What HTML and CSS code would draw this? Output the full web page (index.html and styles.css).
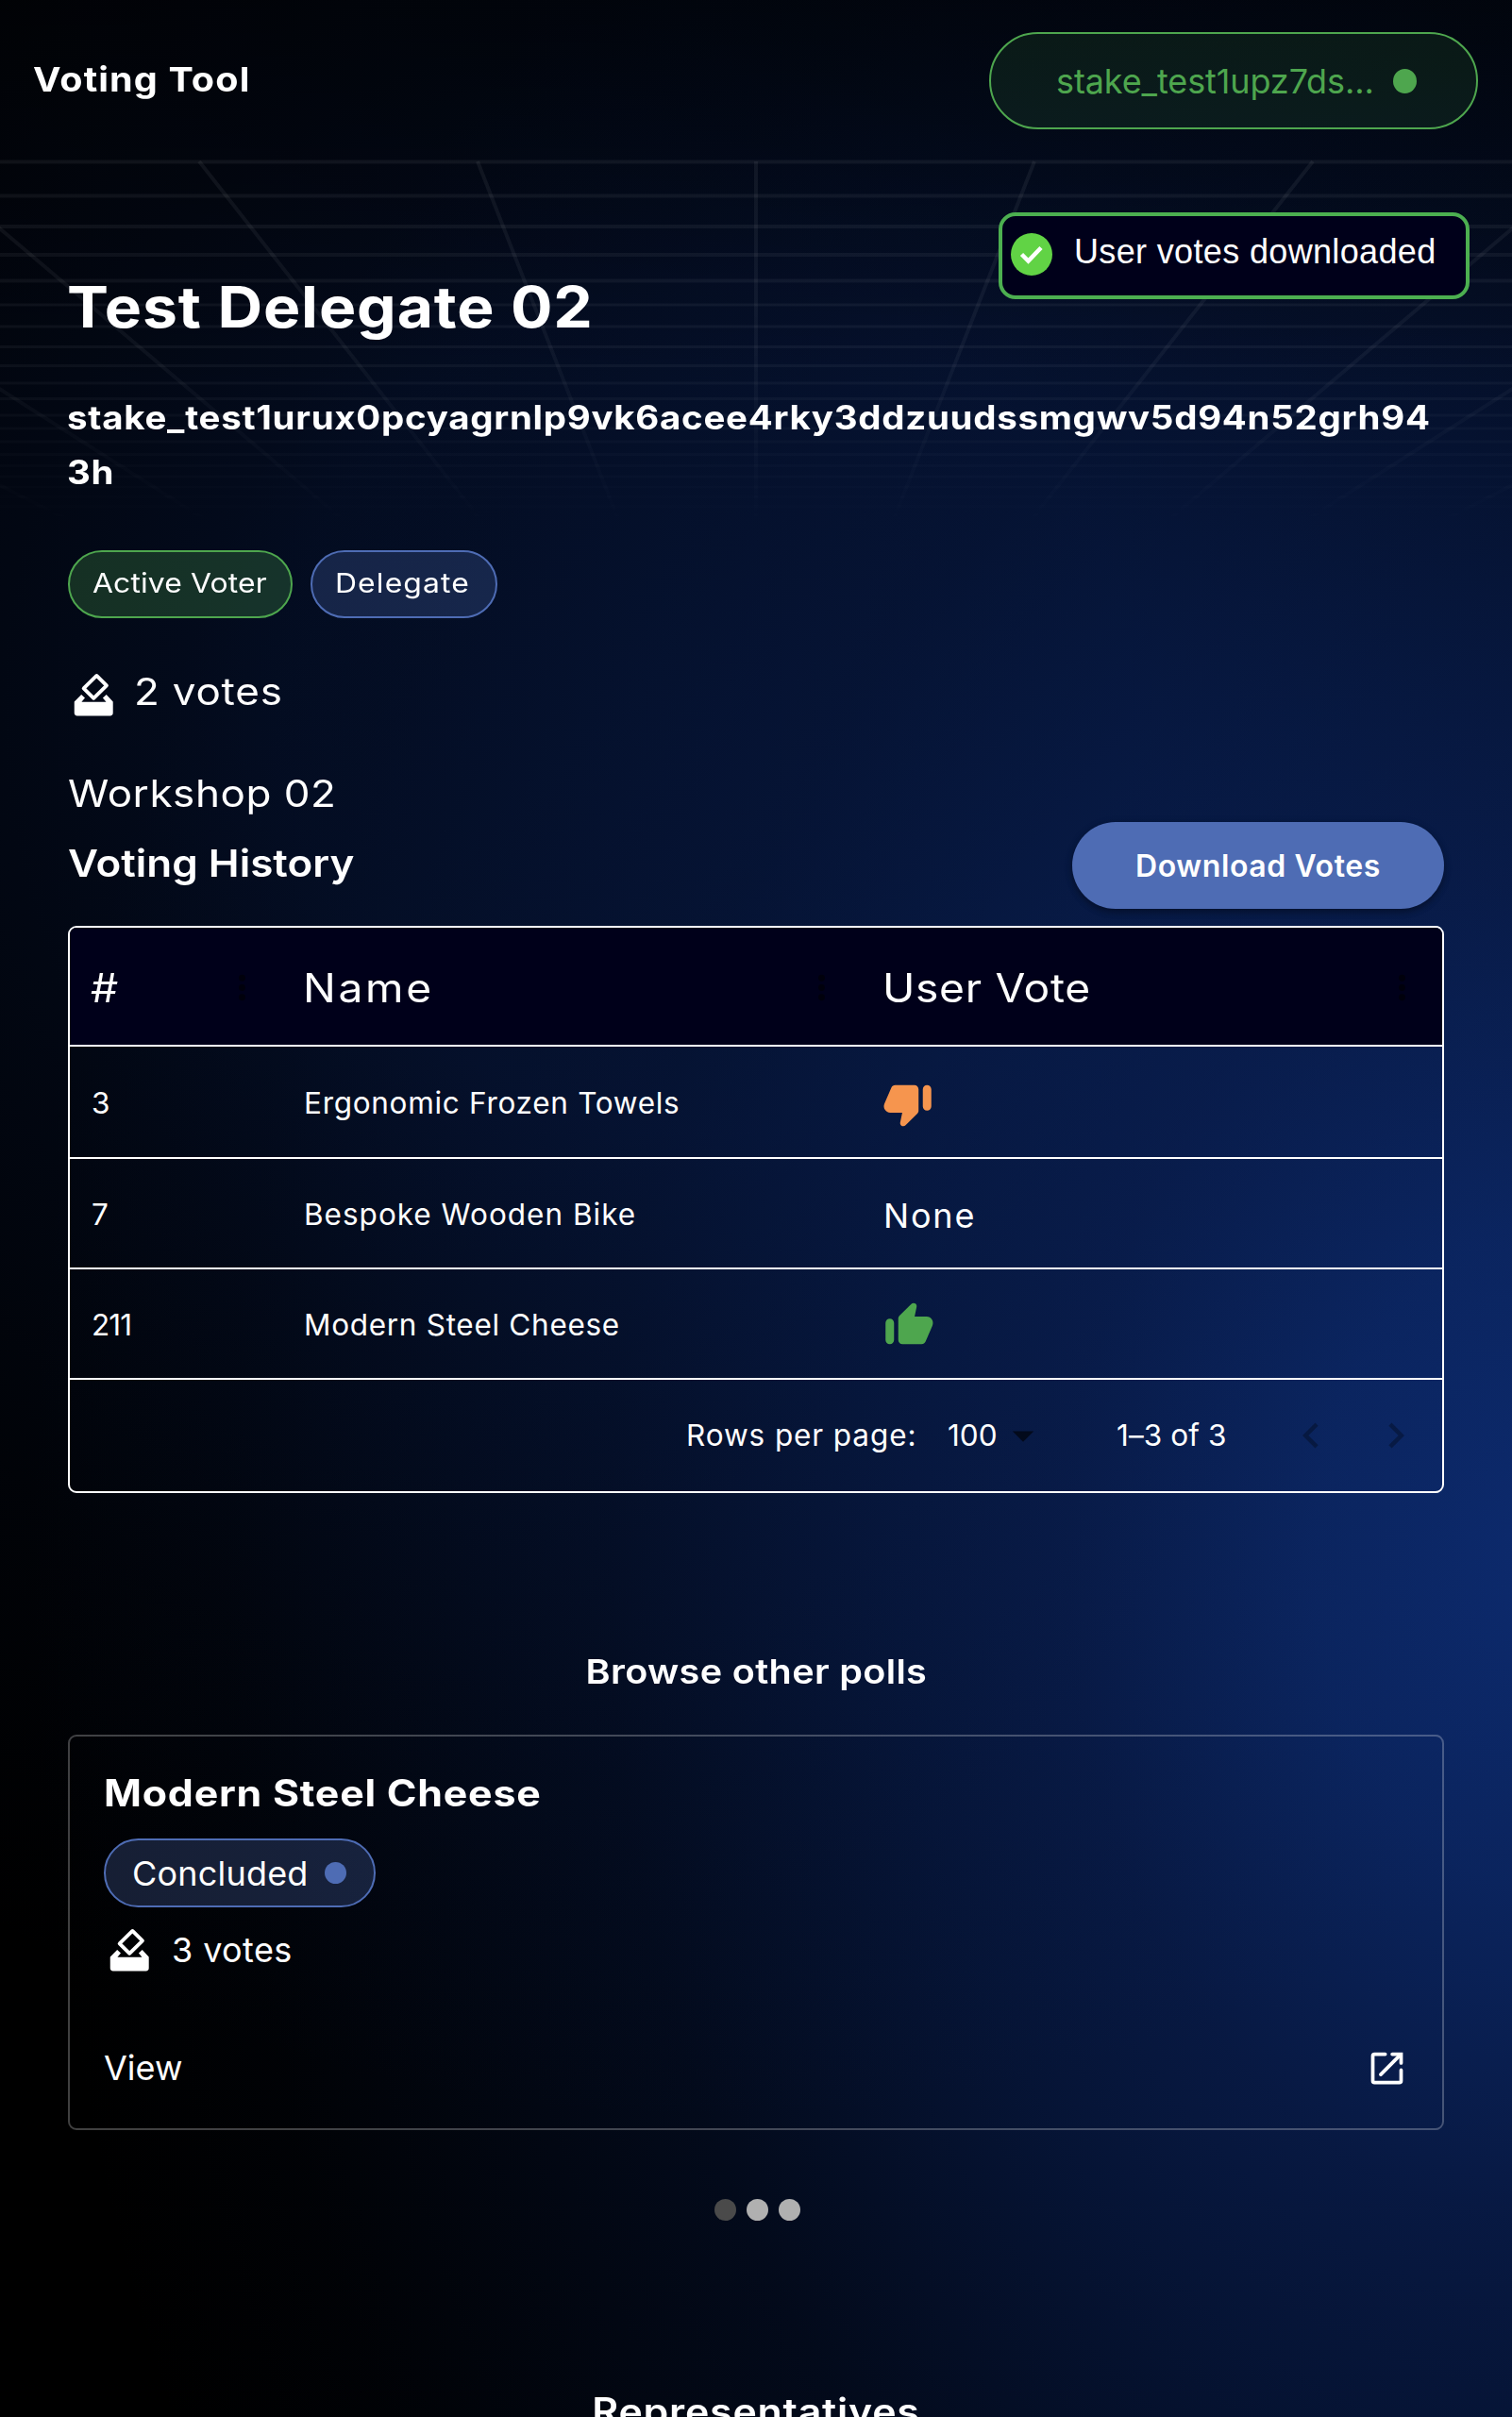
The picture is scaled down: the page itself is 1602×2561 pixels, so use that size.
FILE: index.html
```html
<!DOCTYPE html>
<html lang="en">
<head>
<meta charset="utf-8">
<title>Voting Tool</title>
<link rel="stylesheet" href="styles.css">
</head>
<body>
<svg class="grid-floor" viewBox="0 0 1602 400" aria-hidden="true">
  <defs>
    <linearGradient id="fade" x1="0" y1="0" x2="0" y2="1">
      <stop offset="0" stop-color="#fff"/><stop offset=".5" stop-color="#fff" stop-opacity=".8"/><stop offset=".99" stop-color="#fff" stop-opacity="0"/>
    </linearGradient>
    <mask id="fade-mask"><rect width="1602" height="400" fill="url(#fade)"/></mask>
  </defs>
  <g mask="url(#fade-mask)" stroke="#fff" stroke-opacity=".06" fill="none">
    <path stroke-width="4" d="M0 2.5H1602M0 38.5H1602M0 71H1602M0 101H1602M0 128.5H1602"/>
    <path stroke-width="3" d="M0 154H1602M0 177H1602M0 198.5H1602M0 218.5H1602M0 237H1602M0 253.5H1602M0 271H1602M0 285H1602M0 299H1602M0 312.5H1602M0 324.5H1602M0 336H1602M0 347H1602M0 357.5H1602M0 367.5H1602M0 377H1602"/>
    <path stroke-width="4" d="M801 2V384M506 2L656 384M1096 2L946 384M211 2L511 384M1391 2L1091 384M-84 2L366 384M1686 2L1236 384M-379 2L221 384M1981 2L1381 384M-674 2L76 384M2276 2L1526 384"/>
  </g>
</svg>

<header class="topbar">
  <a class="brand wide">Voting Tool</a>
  <button class="wallet"><span>stake_test1upz7ds...</span><i class="wallet-dot"></i></button>
</header>

<main class="page">
  <h1 class="name wide">Test Delegate 02</h1>
  <p class="stake wide">stake_test1urux0pcyagrnlp9vk6acee4rky3ddzuudssmgwv5d94n52grh94<br>3h</p>
  <div class="chips">
    <span class="chip chip-green"><span class="wide">Active Voter</span></span>
    <span class="chip chip-blue"><span class="wide">Delegate</span></span>
  </div>
  <div class="votes">
    <svg class="icon" viewBox="0 0 24 24"><path fill="none" stroke="#fff" stroke-width="1.7" stroke-linejoin="round" d="M13.5 3.1L18.2 7.7L12.1 13.7L7.4 9.1Z"/><path d="M3 15.3L6.3 12L8 13.5L6.4 15.4H18L16.4 13.5L18.1 12L21.2 15.3V20.6Q21.2 22 19.8 22H4.4Q3 22 3 20.6Z"/></svg>
    <span class="wide">2 votes</span>
  </div>
  <p class="workshop wide">Workshop 02</p>
  <div class="history-head">
    <h2 class="history-title wide">Voting History</h2>
    <button class="download">Download Votes</button>
  </div>

  <section class="table">
    <div class="row head">
      <div class="cell"><span class="wide">#</span><svg class="kebab" viewBox="0 0 24 24"><circle cx="12" cy="6" r="2"/><circle cx="12" cy="12" r="2"/><circle cx="12" cy="18" r="2"/></svg></div>
      <div class="cell head-name"><span class="wide">Name</span><svg class="kebab" viewBox="0 0 24 24"><circle cx="12" cy="6" r="2"/><circle cx="12" cy="12" r="2"/><circle cx="12" cy="18" r="2"/></svg></div>
      <div class="cell"><span class="wide">User Vote</span><svg class="kebab" viewBox="0 0 24 24"><circle cx="12" cy="6" r="2"/><circle cx="12" cy="12" r="2"/><circle cx="12" cy="18" r="2"/></svg></div>
    </div>
    <div class="row first">
      <div class="cell id">3</div>
      <div class="cell">Ergonomic Frozen Towels</div>
      <div class="cell"><svg class="icon down" viewBox="0 0 24 24"><path d="m10.88 21.94 5.53-5.54c.37-.37.58-.88.58-1.41V5c0-1.1-.9-2-2-2H6c-.8 0-1.52.48-1.83 1.21L.91 11.82C.06 13.8 1.51 16 3.66 16h5.65l-.95 4.58c-.1.5.05 1.01.41 1.37.29.29.67.43 1.05.43s.77-.15 1.06-.44zM21 3c-1.1 0-2 .9-2 2v8c0 1.1.9 2 2 2s2-.9 2-2V5c0-1.1-.9-2-2-2z"/></svg></div>
    </div>
    <div class="row">
      <div class="cell id">7</div>
      <div class="cell bike">Bespoke Wooden Bike</div>
      <div class="cell none">None</div>
    </div>
    <div class="row">
      <div class="cell id">211</div>
      <div class="cell">Modern Steel Cheese</div>
      <div class="cell"><svg class="icon up" viewBox="0 0 24 24"><path d="M13.12 2.06 7.58 7.6c-.37.37-.58.88-.58 1.41V19c0 1.1.9 2 2 2h9c.8 0 1.52-.48 1.84-1.21l3.26-7.61C23.94 10.2 22.49 8 20.34 8h-5.65l.95-4.58c.1-.5-.05-1.01-.41-1.37-.59-.58-1.53-.58-2.11.01zM3 21c1.1 0 2-.9 2-2v-8c0-1.1-.9-2-2-2s-2 .9-2 2v8c0 1.1.9 2 2 2z"/></svg></div>
    </div>
    <div class="pager">
      <span class="pager-label">Rows per page:</span>
      <span class="pager-size">100</span>
      <svg class="icon caret" viewBox="0 0 24 24"><path d="M7 10l5 5 5-5z"/></svg>
      <span class="pager-range">1–3 of 3</span>
      <svg class="icon chev" viewBox="0 0 24 24"><path d="M15.41 16.59 10.83 12l4.58-4.59L14 6l-6 6 6 6 1.41-1.41z"/></svg>
      <svg class="icon chev" viewBox="0 0 24 24"><path d="M8.59 16.59 13.17 12 8.59 7.41 10 6l6 6-6 6-1.41-1.41z"/></svg>
    </div>
  </section>

  <h2 class="section-title"><span class="wide center">Browse other polls</span></h2>
  <article class="card">
    <h3 class="card-title wide">Modern Steel Cheese</h3>
    <span class="status">Concluded<i class="status-dot"></i></span>
    <div class="card-votes">
      <svg class="icon" viewBox="0 0 24 24"><path fill="none" stroke="#fff" stroke-width="1.7" stroke-linejoin="round" d="M13.5 3.1L18.2 7.7L12.1 13.7L7.4 9.1Z"/><path d="M3 15.3L6.3 12L8 13.5L6.4 15.4H18L16.4 13.5L18.1 12L21.2 15.3V20.6Q21.2 22 19.8 22H4.4Q3 22 3 20.6Z"/></svg>
      <span>3 votes</span>
    </div>
    <div class="card-foot"><span>View</span>
      <svg class="open" viewBox="0 0 24 24" fill="none" stroke="#fff" stroke-width="2" stroke-linejoin="round"><path stroke-linecap="round" d="M11 4H5Q4 4 4 5V19Q4 20 5 20H19Q20 20 20 19V13M8.5 15.5L19.5 4.5"/><path stroke-linecap="round" stroke-linejoin="miter" d="M15 4H20V9"/></svg>
    </div>
  </article>
  <div class="dots"><i class="dot active"></i><i class="dot"></i><i class="dot"></i></div>
  <h2 class="section-title reps"><span class="wide center">Representatives</span></h2>
</main>

<div class="toast" role="status">
  <svg class="toast-icon" viewBox="0 0 44 45"><ellipse cx="22" cy="22.5" rx="22" ry="22.5" fill="#61d345"/><path d="M11.5 22.5L18.5 29.5L32 15.5" fill="none" stroke="#fff" stroke-width="4.5"/></svg>
  <span>User votes downloaded</span>
</div>
</body>
</html>
```
FILE: styles.css
```css
* { box-sizing: border-box; margin: 0; padding: 0; }

body {
  position: relative;
  height: 2561px;
  overflow: hidden;
  color: #fff;
  font-family: Inter, "Open Sans", sans-serif;
  font-size: 36px;
  line-height: 50px;
  white-space: nowrap;
  background:
    linear-gradient(rgba(0, 0, 0, .4), transparent 420px),
    radial-gradient(circle 1500px at 750px 750px, rgba(12, 42, 112, .31) 0, rgba(12, 42, 112, .28) 30%, rgba(12, 42, 112, .17) 50%, rgba(12, 42, 112, .07) 73%, transparent),
    radial-gradient(1620px 2200px at 1650px 1650px, rgba(13, 44, 114, .96) 0, rgba(13, 44, 114, .82) 16%, rgba(13, 42, 112, .59) 32%, rgba(12, 42, 112, .47) 43%, rgba(12, 42, 112, .36) 52%, rgba(12, 42, 112, .24) 62%, rgba(12, 42, 112, .14) 75%, rgba(12, 42, 112, .05) 87%, transparent),
    #000;
}

i { display: block; flex: none; border-radius: 50%; }
button { font: inherit; color: inherit; border: 0; }
svg { display: block; flex: none; fill: currentColor; }

/* Display text is set slightly extended */
.wide { transform: scaleX(1.1); transform-origin: left center; }
.wide.center { display: inline-block; transform-origin: center; }

.grid-floor { position: absolute; left: 0; top: 169px; width: 1602px; height: 400px; }

/* Header */
.topbar {
  position: relative;
  display: flex;
  justify-content: space-between;
  align-items: center;
  height: 171px;
  padding: 0 36px 0 35px;
}
.brand { padding-bottom: 3px; font-weight: 700; letter-spacing: 1px; }
.wallet {
  display: flex;
  align-items: center;
  gap: 20px;
  width: 518px;
  height: 103px;
  padding: 0 0 0 69px;
  color: #4ea64e;
  background: rgba(78, 166, 78, .12);
  border: 2px solid #4ea64e;
  border-radius: 52px;
  letter-spacing: -.1px;
}
.wallet-dot { width: 25px; height: 26px; background: #4ea64e; }

/* Profile */
.page { position: relative; padding: 114px 72px 0; }
.name { margin-left: -1px; font-size: 60px; line-height: 80px; letter-spacing: .8px; }
.stake {
  margin: 48px 0 0 -1px;
  font-size: 35px;
  font-weight: 700;
  line-height: 58px;
  letter-spacing: .64px;
}
.chips { display: flex; gap: 19px; margin-top: 54px; }
.chip {
  display: flex;
  align-items: center;
  height: 72px;
  padding: 0 0 2px 24px;
  font-size: 29px;
  border: 2px solid;
  border-radius: 36px;
}
.chip-green { width: 238px; letter-spacing: .1px; background: rgba(78, 166, 78, .26); border-color: #4ea64e; }
.chip-blue { width: 198px; letter-spacing: 1px; background: rgba(78, 108, 180, .26); border-color: #4e6cb4; }
.icon { width: 54px; height: 54px; }
.votes {
  display: flex;
  gap: 16px;
  margin-top: 54px;
  font-size: 40px;
  line-height: 48px;
  letter-spacing: .7px;
}
.workshop { margin-top: 53px; font-size: 40px; letter-spacing: .5px; }
.history-head { display: flex; justify-content: space-between; align-items: center; margin-top: 5px; }
.history-title { padding-bottom: 4px; font-size: 40px; font-weight: 600; letter-spacing: 0; }
.download {
  width: 394px;
  height: 92px;
  padding-top: 1px;
  font-size: 32px;
  font-weight: 600;
  letter-spacing: .6px;
  background: #4e6cb4;
  border-radius: 46px;
  box-shadow: 0 4px 6px rgba(0, 0, 0, .25), 0 2px 10px rgba(0, 0, 0, .15);
}

/* Vote table */
.table {
  height: 601px;
  margin-top: 18px;
  font-size: 31.5px;
  letter-spacing: .7px;
  border: 2px solid #fff;
  border-radius: 9px;
  overflow: hidden;
}
.row { display: grid; grid-template-columns: 225px 614px 1fr; height: 117px; border-bottom: 2px solid #fff; }
.row.first { height: 119px; }
.row.head {
  height: 126px;
  font-size: 42px;
  letter-spacing: .6px;
  background: #00001a;
}
.cell { display: flex; align-items: center; padding: 2px 23px 0; }
.head .cell { justify-content: space-between; padding: 3px 22px 0; }
.head .head-name { letter-spacing: 2.4px; }
.id { letter-spacing: -.9px; }
.bike { letter-spacing: 1px; }
.cell.none { padding-top: 5px; font-size: 36px; letter-spacing: 1.8px; }
.kebab { width: 41px; height: 41px; color: #00000c; }
.down { margin: 2px 0 0 -1px; color: #f6954e; }
.up { margin: 1px 0 0; color: #4ea64e; }
.pager { display: flex; align-items: center; justify-content: flex-end; height: 118px; padding-right: 22px; }
.pager-label { width: 277px; letter-spacing: .9px; }
.pager-size { width: 53px; letter-spacing: 0; }
.caret { color: rgba(0, 0, 0, .6); }
.pager-range { width: 179px; margin-left: 72px; letter-spacing: .1px; }
.chev { color: rgba(0, 0, 0, .3); }
.chev + .chev { margin-left: 36px; }

/* Other polls */
.section-title { margin-top: 164px; font-size: 36px; font-weight: 600; letter-spacing: .3px; text-align: center; }
.card {
  height: 419px;
  margin-top: 42px;
  padding: 35px 36px 0;
  border: 2px solid rgba(255, 255, 255, .25);
  border-radius: 9px;
}
.card-title { font-size: 39px; font-weight: 700; letter-spacing: .7px; }
.status {
  display: flex;
  align-items: center;
  gap: 17px;
  width: 288px;
  height: 73px;
  margin-top: 23px;
  padding-left: 28px;
  letter-spacing: .2px;
  background: rgba(78, 108, 180, .28);
  border: 2px solid #4e6cb4;
  border-radius: 37px;
}
.status-dot { width: 23px; height: 23px; background: #4e6cb4; }
.card-votes { display: flex; align-items: center; gap: 18px; margin-top: 18px; letter-spacing: .4px; }
.card-foot { display: flex; justify-content: space-between; align-items: center; height: 54px; margin-top: 71px; }
.open { width: 45px; height: 45px; fill: none; }
.dots { display: flex; justify-content: center; gap: 11px; margin-top: 73px; padding-left: 2px; }
.dot { width: 23px; height: 23px; background: #b0b0b0; }
.dot.active { background: #4a4a4a; }
.reps { margin-top: 177px; font-size: 39px; letter-spacing: .7px; }

/* Notification */
.toast {
  position: absolute;
  left: 1058px;
  top: 225px;
  display: flex;
  gap: 23px;
  width: 499px;
  height: 92px;
  padding: 18px 0 0 9px;
  font-family: "Liberation Sans", sans-serif;
  line-height: 40px;
  letter-spacing: .35px;
  background: #00001a;
  border: 4.5px solid #4caf50;
  border-radius: 18px;
}
.toast-icon { width: 44px; height: 45px; }
```
